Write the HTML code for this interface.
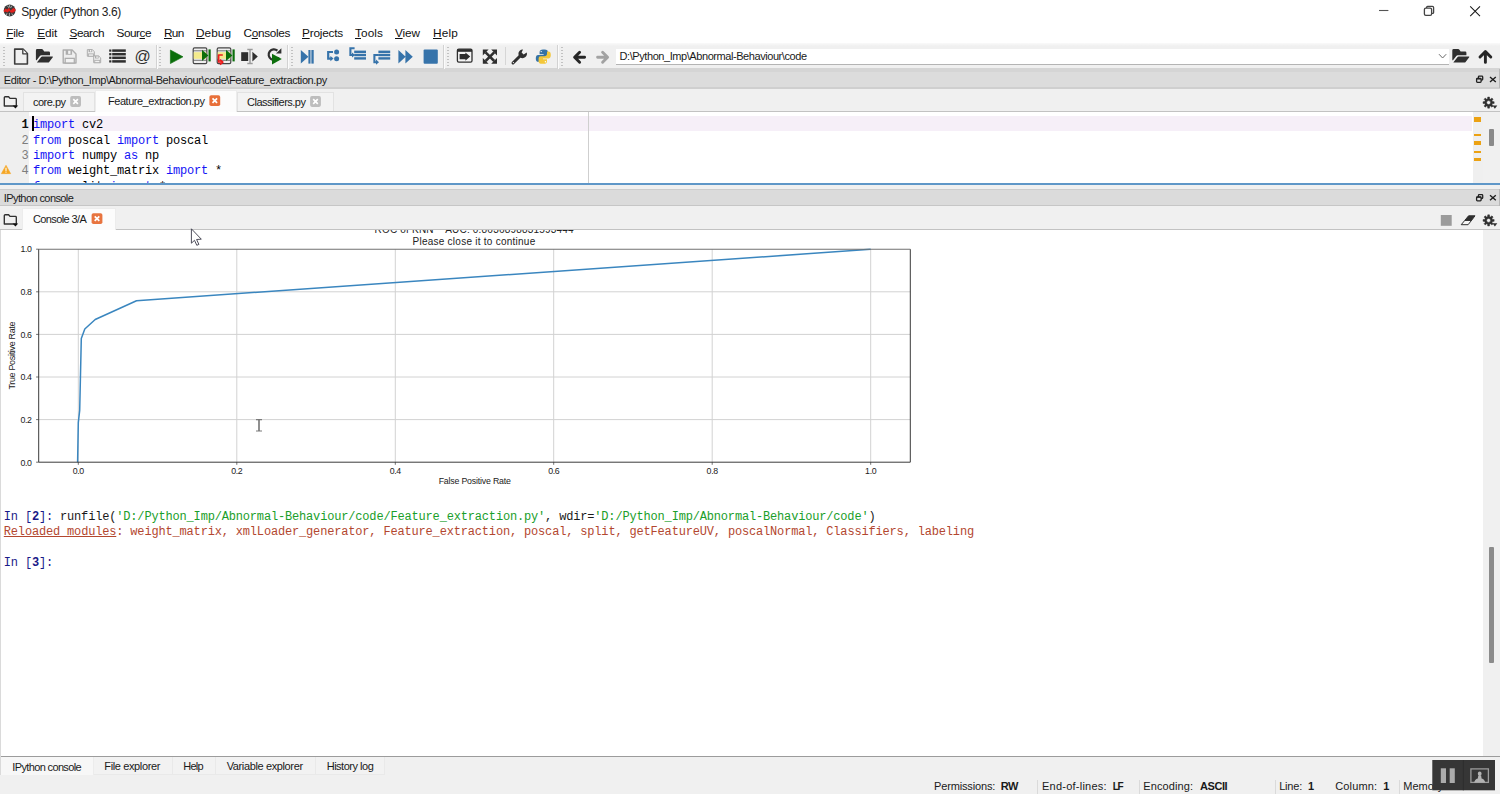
<!DOCTYPE html>
<html>
<head>
<meta charset="utf-8">
<title>Spyder (Python 3.6)</title>
<style>
*{box-sizing:border-box;margin:0;padding:0}
html,body{width:1500px;height:794px;overflow:hidden;background:#fff}
body{font-family:"Liberation Sans",sans-serif;font-size:11px;color:#000;position:relative}
.abs{position:absolute}
.t{position:absolute;white-space:pre;line-height:20px;height:20px}
svg{position:absolute;overflow:visible}
u{text-decoration:underline;text-underline-offset:1px;text-decoration-thickness:1px}
#titlebar{left:0;top:0;width:1500px;height:22px;background:#fff}
#menubar{left:0;top:22px;width:1500px;height:22px;background:#fff}
#toolbar{left:0;top:43px;width:1500px;height:25px;background:linear-gradient(#fafafa,#f0f0f0 3px)}
#edtitle{left:0;top:68px;width:1500px;height:21px;background:#dcdcdc;border-top:4px solid #d5d5d5;border-bottom:2px solid #cfcfcf}
#edtabs{left:0;top:89px;width:1500px;height:23px;background:#f0f0f0;border-bottom:1px solid #c2c2c2}
#editor{left:0;top:112px;width:1500px;height:71px;background:#fff;overflow:hidden}
#split{left:0;top:183px;width:1500px;height:6px;background:#f0f0f0;border-top:2px solid #5f97c8}
#cotitle{left:0;top:189px;width:1500px;height:17px;background:#dbdbdb;border-top:1px solid #cdcdcd;border-bottom:1px solid #c6c6c6}
#cotabs{left:0;top:206px;width:1500px;height:24px;background:#f0f0f0;border-bottom:1px solid #c2c2c2}
#console{left:0;top:230px;width:1500px;height:526px;background:#fff;overflow:hidden}
#bottabs{left:0;top:756px;width:1500px;height:22px;background:#f0f0f0;border-top:1px solid #9c9c9c}
#status{left:0;top:778px;width:1500px;height:16px;background:#f0f0f0}
.tab{position:absolute;background:#f3f3f3;border:1px solid #e2e2e2;border-bottom:none}
.tab.sel{background:#fcfcfc;border-color:#ececec}
.sep{position:absolute;width:1px;background:#d4d4d4}
.grip{position:absolute;width:2px;height:19px;top:47px;background:repeating-linear-gradient(#c2c2c2 0 1px,transparent 1px 3px)}
</style>
</head>
<body>
<div id="titlebar" class="abs"></div>
<div id="menubar" class="abs"></div>
<div id="toolbar" class="abs"></div>
<div id="edtitle" class="abs"></div>
<div id="edtabs" class="abs"></div>
<div id="editor" class="abs"></div>
<div id="split" class="abs"></div>
<div id="cotitle" class="abs"></div>
<div id="cotabs" class="abs"></div>
<div id="console" class="abs"></div>
<div id="bottabs" class="abs"></div>
<div id="status" class="abs"></div>
<div class="t" style="left:21.20px;top:2px;font-size:12px;color:#222;letter-spacing:-0.370px;">Spyder (Python 3.6)</div>
<div class="t" style="left:6.30px;top:23px;font-size:11.8px;color:#111;letter-spacing:-0.329px;"><u>F</u>ile</div>
<div class="t" style="left:37.30px;top:23px;font-size:11.8px;color:#111;letter-spacing:-0.082px;"><u>E</u>dit</div>
<div class="t" style="left:69.50px;top:23px;font-size:11.8px;color:#111;letter-spacing:-0.482px;"><u>S</u>earch</div>
<div class="t" style="left:116.50px;top:23px;font-size:11.8px;color:#111;letter-spacing:-0.482px;">Sour<u>c</u>e</div>
<div class="t" style="left:164.00px;top:23px;font-size:11.8px;color:#111;letter-spacing:-0.719px;"><u>R</u>un</div>
<div class="t" style="left:196.00px;top:23px;font-size:11.8px;color:#111;letter-spacing:0.047px;"><u>D</u>ebug</div>
<div class="t" style="left:243.50px;top:23px;font-size:11.8px;color:#111;letter-spacing:-0.336px;">C<u>o</u>nsoles</div>
<div class="t" style="left:302.00px;top:23px;font-size:11.8px;color:#111;letter-spacing:-0.203px;"><u>P</u>rojects</div>
<div class="t" style="left:355.00px;top:23px;font-size:11.8px;color:#111;letter-spacing:0.091px;"><u>T</u>ools</div>
<div class="t" style="left:395.00px;top:23px;font-size:11.8px;color:#111;letter-spacing:-0.090px;"><u>V</u>iew</div>
<div class="t" style="left:433.00px;top:23px;font-size:11.8px;color:#111;letter-spacing:0.184px;"><u>H</u>elp</div>
<div class="t" style="left:3.75px;top:70px;font-size:11px;color:#1a1a1a;letter-spacing:-0.411px;">Editor - D:\Python_Imp\Abnormal-Behaviour\code\Feature_extraction.py</div>
<div class="t" style="left:3.75px;top:188px;font-size:11px;color:#1a1a1a;letter-spacing:-0.585px;">IPython console</div>
<div class="tab" style="left:23px;top:92px;width:72px;height:19px"></div>
<div class="tab sel" style="left:95px;top:90px;width:141.5px;height:22px"></div>
<div class="tab" style="left:236.5px;top:92px;width:97.5px;height:19px"></div>
<div class="t" style="left:33.00px;top:92px;font-size:11px;color:#1a1a1a;letter-spacing:-0.511px;">core.py</div>
<div class="t" style="left:108.00px;top:91px;font-size:11px;color:#1a1a1a;letter-spacing:-0.471px;">Feature_extraction.py</div>
<div class="t" style="left:247.00px;top:92px;font-size:11px;color:#1a1a1a;letter-spacing:-0.493px;">Classifiers.py</div>
<div class="tab sel" style="left:22px;top:208px;width:94px;height:22px"></div>
<div class="t" style="left:33.00px;top:209px;font-size:11px;color:#1a1a1a;letter-spacing:-0.608px;">Console 3/A</div>
<div class="tab sel" style="left:0px;top:757px;width:94px;height:18px;border-top:none;border-left:none;background:#f7f7f7"></div>
<div class="tab" style="left:94px;top:757px;width:79px;height:18px;border-top:none;border-left:none;border-color:#e9e9e9;border-bottom:1px solid #e9e9e9;background:#f2f2f2"></div>
<div class="tab" style="left:173px;top:757px;width:43px;height:18px;border-top:none;border-left:none;border-color:#e9e9e9;border-bottom:1px solid #e9e9e9;background:#f2f2f2"></div>
<div class="tab" style="left:216px;top:757px;width:100px;height:18px;border-top:none;border-left:none;border-color:#e9e9e9;border-bottom:1px solid #e9e9e9;background:#f2f2f2"></div>
<div class="tab" style="left:316px;top:757px;width:69px;height:18px;border-top:none;border-left:none;border-color:#e9e9e9;border-bottom:1px solid #e9e9e9;background:#f2f2f2"></div>
<div class="t" style="left:12.30px;top:757px;font-size:11px;color:#1a1a1a;letter-spacing:-0.639px;">IPython console</div>
<div class="t" style="left:104.30px;top:756px;font-size:11px;color:#1a1a1a;letter-spacing:-0.372px;">File explorer</div>
<div class="t" style="left:183.30px;top:756px;font-size:11px;color:#1a1a1a;letter-spacing:-0.806px;">Help</div>
<div class="t" style="left:226.70px;top:756px;font-size:11px;color:#1a1a1a;letter-spacing:-0.373px;">Variable explorer</div>
<div class="t" style="left:326.70px;top:756px;font-size:11px;color:#1a1a1a;letter-spacing:-0.488px;">History log</div>
<div class="abs" style="left:616px;top:48.6px;width:833px;height:16.4px;background:#fff;border-bottom:1px solid #b4b4b4"></div>
<div class="t" style="left:619.60px;top:46px;font-size:11px;color:#1a1a1a;letter-spacing:-0.432px;">D:\Python_Imp\Abnormal-Behaviour\code</div>
<div class="abs" style="left:0;top:112px;width:29px;height:71px;background:#efefef"></div>
<div class="abs" style="left:29px;top:116px;width:1443px;height:15px;background:#f6eff8"></div>
<div class="abs" style="left:588px;top:112px;width:1px;height:71px;background:#cfcfcf"></div>
<div class="abs" style="left:1473px;top:112px;width:10px;height:71px;background:#efefef"></div>
<div class="abs" style="left:1483px;top:112px;width:17px;height:71px;background:#f0f0f0"></div>
<div class="abs" style="left:1489px;top:129px;width:5px;height:17px;background:#8a8a8a;border-radius:1px"></div>
<div class="abs" style="left:1474px;top:116.8px;width:7.4px;height:5.7px;background:#eca213"></div>
<div class="abs" style="left:1474px;top:133.7px;width:7.4px;height:2.4px;background:#eca213"></div>
<div class="abs" style="left:1474px;top:141.3px;width:7.4px;height:3.9px;background:#eca213"></div>
<div class="abs" style="left:1474px;top:150.6px;width:7.4px;height:2.5px;background:#eca213"></div>
<div class="abs" style="left:1474px;top:158.4px;width:7.4px;height:2.5px;background:#eca213"></div>
<div class="abs" style="left:0;top:112px;width:1500px;height:71.3px;overflow:hidden"><div class="abs" style="left:0;top:-112px;width:1500px;height:300px">
<div class="t" style="left:21.40px;top:115px;font-size:12px;font-family:'Liberation Mono',monospace;font-weight:700;color:#111;letter-spacing:-0.203px;">1</div>
<div class="t" style="left:33.00px;top:115px;font-size:12px;font-family:'Liberation Mono',monospace;color:#1414f5;letter-spacing:-0.203px;">import</div>
<div class="t" style="left:82.00px;top:115px;font-size:12px;font-family:'Liberation Mono',monospace;letter-spacing:-0.203px;">cv2</div>
<div class="t" style="left:21.40px;top:131px;font-size:12px;font-family:'Liberation Mono',monospace;color:#7d7d7d;letter-spacing:-0.203px;">2</div>
<div class="t" style="left:33.00px;top:131px;font-size:12px;font-family:'Liberation Mono',monospace;color:#1414f5;letter-spacing:-0.203px;">from</div>
<div class="t" style="left:68.00px;top:131px;font-size:12px;font-family:'Liberation Mono',monospace;letter-spacing:-0.203px;">poscal</div>
<div class="t" style="left:117.00px;top:131px;font-size:12px;font-family:'Liberation Mono',monospace;color:#1414f5;letter-spacing:-0.203px;">import</div>
<div class="t" style="left:166.00px;top:131px;font-size:12px;font-family:'Liberation Mono',monospace;letter-spacing:-0.203px;">poscal</div>
<div class="t" style="left:21.40px;top:146px;font-size:12px;font-family:'Liberation Mono',monospace;color:#7d7d7d;letter-spacing:-0.203px;">3</div>
<div class="t" style="left:33.00px;top:146px;font-size:12px;font-family:'Liberation Mono',monospace;color:#1414f5;letter-spacing:-0.203px;">import</div>
<div class="t" style="left:82.00px;top:146px;font-size:12px;font-family:'Liberation Mono',monospace;letter-spacing:-0.203px;">numpy</div>
<div class="t" style="left:124.00px;top:146px;font-size:12px;font-family:'Liberation Mono',monospace;color:#1414f5;letter-spacing:-0.203px;">as</div>
<div class="t" style="left:145.00px;top:146px;font-size:12px;font-family:'Liberation Mono',monospace;letter-spacing:-0.203px;">np</div>
<div class="t" style="left:21.40px;top:161px;font-size:12px;font-family:'Liberation Mono',monospace;color:#7d7d7d;letter-spacing:-0.203px;">4</div>
<div class="t" style="left:33.00px;top:161px;font-size:12px;font-family:'Liberation Mono',monospace;color:#1414f5;letter-spacing:-0.203px;">from</div>
<div class="t" style="left:68.00px;top:161px;font-size:12px;font-family:'Liberation Mono',monospace;letter-spacing:-0.202px;">weight_matrix</div>
<div class="t" style="left:166.00px;top:161px;font-size:12px;font-family:'Liberation Mono',monospace;color:#1414f5;letter-spacing:-0.203px;">import</div>
<div class="t" style="left:215.00px;top:161px;font-size:12px;font-family:'Liberation Mono',monospace;letter-spacing:-0.203px;">*</div>
<div class="t" style="left:33.00px;top:177px;font-size:12px;font-family:'Liberation Mono',monospace;color:#1414f5;letter-spacing:-0.203px;">from</div>
<div class="t" style="left:68.00px;top:177px;font-size:12px;font-family:'Liberation Mono',monospace;letter-spacing:-0.203px;">split</div>
<div class="t" style="left:110.00px;top:177px;font-size:12px;font-family:'Liberation Mono',monospace;color:#1414f5;letter-spacing:-0.203px;">import</div>
<div class="t" style="left:159.00px;top:177px;font-size:12px;font-family:'Liberation Mono',monospace;letter-spacing:-0.203px;">*</div>
</div></div>
<div class="abs" style="left:32.2px;top:116px;width:1.8px;height:15px;background:#000"></div>
<svg style="left:1.3px;top:165.3px" width="10" height="9" viewBox="0 0 11 10"><path d="M5.5 0.3 L10.7 9.6 L0.3 9.6 Z" fill="#f5a623" stroke="#f5a623" stroke-width="0.6" stroke-linejoin="round"/><rect x="4.9" y="3" width="1.2" height="3.6" fill="#fff"/><rect x="4.9" y="7.3" width="1.2" height="1.2" fill="#fff"/></svg>
<div class="abs" style="left:0;top:230px;width:1483px;height:525px;overflow:hidden"><div class="abs" style="left:0;top:-230px;width:1483px;height:800px">
<div class="t" style="left:374.50px;top:220px;font-size:10px;color:#222;letter-spacing:0.205px;">ROC of KNN    AUC: 0.8636898831593444</div>
<div class="t" style="left:412.50px;top:232px;font-size:10px;color:#222;letter-spacing:0.252px;">Please close it to continue</div>
<svg style="left:0;top:0" width="1000" height="500" viewBox="0 0 1000 500"><line x1="78.3" y1="249.2" x2="78.3" y2="462.2" stroke="#d2d2d2" stroke-width="1"/><line x1="236.8" y1="249.2" x2="236.8" y2="462.2" stroke="#d2d2d2" stroke-width="1"/><line x1="395.3" y1="249.2" x2="395.3" y2="462.2" stroke="#d2d2d2" stroke-width="1"/><line x1="553.7" y1="249.2" x2="553.7" y2="462.2" stroke="#d2d2d2" stroke-width="1"/><line x1="712.2" y1="249.2" x2="712.2" y2="462.2" stroke="#d2d2d2" stroke-width="1"/><line x1="870.7" y1="249.2" x2="870.7" y2="462.2" stroke="#d2d2d2" stroke-width="1"/><line x1="38.7" y1="419.6" x2="910.3" y2="419.6" stroke="#d2d2d2" stroke-width="1"/><line x1="38.7" y1="377.0" x2="910.3" y2="377.0" stroke="#d2d2d2" stroke-width="1"/><line x1="38.7" y1="334.4" x2="910.3" y2="334.4" stroke="#d2d2d2" stroke-width="1"/><line x1="38.7" y1="291.8" x2="910.3" y2="291.8" stroke="#d2d2d2" stroke-width="1"/><polyline fill="none" stroke="#3a86bf" stroke-width="1.5" stroke-linejoin="round" points="77.6,462.2 78.3,422.7 79.7,410.4 81.3,338.4 84.8,329.0 95.2,319.5 136.5,300.7 870.7,249.3"/><path d="M38.7 249.2 V462.2 H910.3 V249.2" fill="none" stroke="#3a3a3a" stroke-width="1"/><path d="M38.7 249.2 H910.3" stroke="#707070" stroke-width="1.1"/><line x1="78.3" y1="462.2" x2="78.3" y2="464.8" stroke="#333" stroke-width="0.7"/><line x1="36.1" y1="462.2" x2="38.7" y2="462.2" stroke="#333" stroke-width="0.7"/><line x1="236.8" y1="462.2" x2="236.8" y2="464.8" stroke="#333" stroke-width="0.7"/><line x1="36.1" y1="419.6" x2="38.7" y2="419.6" stroke="#333" stroke-width="0.7"/><line x1="395.3" y1="462.2" x2="395.3" y2="464.8" stroke="#333" stroke-width="0.7"/><line x1="36.1" y1="377.0" x2="38.7" y2="377.0" stroke="#333" stroke-width="0.7"/><line x1="553.7" y1="462.2" x2="553.7" y2="464.8" stroke="#333" stroke-width="0.7"/><line x1="36.1" y1="334.4" x2="38.7" y2="334.4" stroke="#333" stroke-width="0.7"/><line x1="712.2" y1="462.2" x2="712.2" y2="464.8" stroke="#333" stroke-width="0.7"/><line x1="36.1" y1="291.8" x2="38.7" y2="291.8" stroke="#333" stroke-width="0.7"/><line x1="870.7" y1="462.2" x2="870.7" y2="464.8" stroke="#333" stroke-width="0.7"/><line x1="36.1" y1="249.2" x2="38.7" y2="249.2" stroke="#333" stroke-width="0.7"/></svg>
<div class="t" style="left:72.70px;top:461px;font-size:8.8px;color:#222;letter-spacing:-0.345px;">0.0</div>
<div class="t" style="left:20.60px;top:453px;font-size:8.8px;color:#222;letter-spacing:-0.411px;">0.0</div>
<div class="t" style="left:231.18px;top:461px;font-size:8.8px;color:#222;letter-spacing:-0.345px;">0.2</div>
<div class="t" style="left:20.60px;top:410px;font-size:8.8px;color:#222;letter-spacing:-0.411px;">0.2</div>
<div class="t" style="left:389.66px;top:461px;font-size:8.8px;color:#222;letter-spacing:-0.345px;">0.4</div>
<div class="t" style="left:20.60px;top:367px;font-size:8.8px;color:#222;letter-spacing:-0.411px;">0.4</div>
<div class="t" style="left:548.14px;top:461px;font-size:8.8px;color:#222;letter-spacing:-0.345px;">0.6</div>
<div class="t" style="left:20.60px;top:325px;font-size:8.8px;color:#222;letter-spacing:-0.411px;">0.6</div>
<div class="t" style="left:706.62px;top:461px;font-size:8.8px;color:#222;letter-spacing:-0.345px;">0.8</div>
<div class="t" style="left:20.60px;top:282px;font-size:8.8px;color:#222;letter-spacing:-0.411px;">0.8</div>
<div class="t" style="left:865.10px;top:461px;font-size:8.8px;color:#222;letter-spacing:-0.345px;">1.0</div>
<div class="t" style="left:20.60px;top:239px;font-size:8.8px;color:#222;letter-spacing:-0.411px;">1.0</div>
<div class="t" style="left:438.70px;top:471px;font-size:8.8px;color:#222;letter-spacing:-0.200px;">False Positive Rate</div>
<div class="t" style="left:0.00px;top:-13px;font-size:9px;color:#222;letter-spacing:-0.328px;transform-origin:0 0;transform:translate(2.3px,389.6px) rotate(-90deg);top:0;left:0;">True Positive Rate</div>
</div></div>
<div class="t" style="left:3.80px;top:507px;font-size:12px;font-family:'Liberation Mono',monospace;color:#1a1a88;letter-spacing:-0.173px;">In [</div>
<div class="t" style="left:31.92px;top:507px;font-size:12px;font-family:'Liberation Mono',monospace;font-weight:700;color:#1a1a88;letter-spacing:-0.173px;">2</div>
<div class="t" style="left:38.95px;top:507px;font-size:12px;font-family:'Liberation Mono',monospace;color:#1a1a88;letter-spacing:-0.173px;">]:</div>
<div class="t" style="left:60.04px;top:507px;font-size:12px;font-family:'Liberation Mono',monospace;color:#1a1a1a;letter-spacing:-0.171px;">runfile(</div>
<div class="t" style="left:116.28px;top:507px;font-size:12px;font-family:'Liberation Mono',monospace;color:#1a9e2a;letter-spacing:-0.171px;">&#x27;D:/Python_Imp/Abnormal-Behaviour/code/Feature_extraction.py&#x27;</div>
<div class="t" style="left:545.11px;top:507px;font-size:12px;font-family:'Liberation Mono',monospace;color:#1a1a1a;letter-spacing:-0.173px;">, wdir=</div>
<div class="t" style="left:594.32px;top:507px;font-size:12px;font-family:'Liberation Mono',monospace;color:#1a9e2a;letter-spacing:-0.172px;">&#x27;D:/Python_Imp/Abnormal-Behaviour/code&#x27;</div>
<div class="t" style="left:868.49px;top:507px;font-size:12px;font-family:'Liberation Mono',monospace;color:#1a1a1a;letter-spacing:-0.173px;">)</div>
<div class="t" style="left:3.80px;top:522px;font-size:12px;font-family:'Liberation Mono',monospace;color:#b3472f;letter-spacing:-0.171px;"><u>Reloaded modules</u></div>
<div class="t" style="left:116.28px;top:522px;font-size:12px;font-family:'Liberation Mono',monospace;color:#b3472f;letter-spacing:-0.171px;">: weight_matrix, xmlLoader_generator, Feature_extraction, poscal, split, getFeatureUV, poscalNormal, Classifiers, labeling</div>
<div class="t" style="left:3.80px;top:553px;font-size:12px;font-family:'Liberation Mono',monospace;color:#1a1a88;letter-spacing:-0.173px;">In [</div>
<div class="t" style="left:31.92px;top:553px;font-size:12px;font-family:'Liberation Mono',monospace;font-weight:700;color:#1a1a88;letter-spacing:-0.173px;">3</div>
<div class="t" style="left:38.95px;top:553px;font-size:12px;font-family:'Liberation Mono',monospace;color:#1a1a88;letter-spacing:-0.173px;">]:</div>
<div class="abs" style="left:1483px;top:230px;width:17px;height:526px;background:#f0f0f0"></div>
<div class="abs" style="left:1489px;top:547px;width:5px;height:116px;background:#8c8c8c;border-radius:1px"></div>
<div class="abs" style="left:0;top:230px;width:1px;height:545px;background:#dadada"></div>
<div class="t" style="left:934.00px;top:776px;font-size:11px;color:#1a1a1a;letter-spacing:-0.147px;">Permissions:</div>
<div class="t" style="left:1000.80px;top:776px;font-size:11px;font-weight:700;color:#1a1a1a;letter-spacing:-0.470px;">RW</div>
<div class="t" style="left:1042.00px;top:776px;font-size:11px;color:#1a1a1a;letter-spacing:0.233px;">End-of-lines:</div>
<div class="t" style="left:1112.80px;top:777px;font-size:10px;font-weight:700;color:#1a1a1a;letter-spacing:-1.309px;">LF</div>
<div class="t" style="left:1143.20px;top:776px;font-size:11px;color:#1a1a1a;letter-spacing:0.118px;">Encoding:</div>
<div class="t" style="left:1200.00px;top:776px;font-size:11px;font-weight:700;color:#1a1a1a;letter-spacing:-0.429px;">ASCII</div>
<div class="t" style="left:1279.20px;top:776px;font-size:11px;color:#1a1a1a;letter-spacing:-0.212px;">Line:</div>
<div class="t" style="left:1308.00px;top:776px;font-size:11px;font-weight:700;color:#1a1a1a;">1</div>
<div class="t" style="left:1335.20px;top:776px;font-size:11px;color:#1a1a1a;letter-spacing:0.147px;">Column:</div>
<div class="t" style="left:1383.20px;top:776px;font-size:11px;font-weight:700;color:#1a1a1a;">1</div>
<div class="t" style="left:1403.20px;top:776px;font-size:11px;color:#1a1a1a;letter-spacing:0.044px;">Memory</div>
<div class="sep" style="left:1037px;top:780px;height:14px;background:#dadada"></div>
<div class="sep" style="left:1139px;top:780px;height:14px;background:#dadada"></div>
<div class="sep" style="left:1275px;top:780px;height:14px;background:#dadada"></div>
<div class="sep" style="left:1399px;top:780px;height:14px;background:#dadada"></div>
<div class="grip" style="left:3.2px"></div>
<div class="grip" style="left:159.4px"></div>
<div class="grip" style="left:291px"></div>
<div class="grip" style="left:447.4px"></div>
<div class="grip" style="left:560.8px"></div>
<div class="sep" style="left:155.5px;top:45px;height:24px;background:#d2d2d2"></div><div class="sep" style="left:156.5px;top:45px;height:24px;background:#fbfbfb"></div>
<div class="sep" style="left:287.2px;top:45px;height:24px;background:#d2d2d2"></div><div class="sep" style="left:288.2px;top:45px;height:24px;background:#fbfbfb"></div>
<div class="sep" style="left:443.3px;top:45px;height:24px;background:#d2d2d2"></div><div class="sep" style="left:444.3px;top:45px;height:24px;background:#fbfbfb"></div>
<div class="sep" style="left:557px;top:45px;height:24px;background:#d2d2d2"></div><div class="sep" style="left:558px;top:45px;height:24px;background:#fbfbfb"></div>
<div class="sep" style="left:505px;top:47px;height:18px;background:#d6d6d6"></div>
<svg style="left:0;top:0" width="1500" height="794" viewBox="0 0 1500 794"><circle cx="9.6" cy="10.5" r="5.9" fill="#3b3b3b"/><path d="M3.7 10.8 L5.4 8.4 L7.2 9.6 L9 7.8 L10.6 10.6 L13.2 8 L15.5 9 L15.5 10.8 L13.6 12.4 L11 12.8 L9.4 11 L7.4 12.6 L5.2 11.6 L4 12.4 Z" fill="#e0201c"/><path d="M9.6 4.8 V7.4 M7.4 5.6 L8.8 7.8 M11.8 5.6 L10.6 8 M9.4 13 V16 M7 13.2 L6.4 15.2 M11.8 13.4 L12.6 15.2" stroke="#d8d8d8" stroke-width="0.7"/><path d="M1379 10.5 H1388.4" stroke="#555" stroke-width="1.1"/><rect x="1424.4" y="8.2" width="7.2" height="7.2" rx="1.4" fill="none" stroke="#444" stroke-width="1.3"/><path d="M1426.6 8 V7.4 Q1426.6 6.4 1427.6 6.4 H1432.4 Q1433.6 6.4 1433.6 7.6 V12.4 Q1433.6 13.4 1432.6 13.4 H1432" fill="none" stroke="#444" stroke-width="1.3"/><path d="M1470.2 6.4 L1480 16.2 M1480 6.4 L1470.2 16.2" stroke="#1a1a1a" stroke-width="1.05"/><path d="M14.7 49.1 H23 L27.4 53.6 V64 H14.7 Z" fill="none" stroke="#3d3d3d" stroke-width="1.6" stroke-linejoin="round"/><path d="M22.8 49.3 V53.8 H27.2" fill="#fafafa" stroke="#3d3d3d" stroke-width="1.3" stroke-linejoin="round"/><path d="M35.9 59.8 V50.4 Q35.9 49.1 37.2 49.1 H41.6 Q42.6 49.1 43.2 50 L44.2 51.5 H48.8 Q50 51.5 50 52.7 V55.2 H41.4 Q40.4 55.2 39.9 56 L36.4 60.6 Z" fill="#2f2f2f"/><path d="M36.9 62.5 L41.2 56.9 Q41.5 56.4 42.2 56.4 H52.4 Q53.3 56.4 52.8 57.2 L49.2 61.9 Q48.8 62.5 48 62.5 Z" fill="#2f2f2f"/><path d="M63.20 50.00 H72.16 L76.00 53.91 V63.00 H63.20 Z" fill="#eeeeee" stroke="#adadad" stroke-width="1.4" stroke-linejoin="round"/><rect x="65.69" y="50.00" width="6.39" height="4.75" fill="#adadad"/><rect x="68.18" y="50.72" width="2.27" height="3.17" fill="#f4f4f4"/><rect x="65.20" y="58.37" width="9.09" height="4.63" fill="#f2f2f2" stroke="#adadad" stroke-width="1.26"/><path d="M87.30 49.60 H92.24 L94.30 51.53 V56.20 H87.30 Z" fill="#eeeeee" stroke="#adadad" stroke-width="1.0" stroke-linejoin="round"/><rect x="88.60" y="49.60" width="3.60" height="2.51" fill="#adadad"/><rect x="90.00" y="49.98" width="1.28" height="1.67" fill="#f4f4f4"/><rect x="88.32" y="53.89" width="5.12" height="2.31" fill="#f2f2f2" stroke="#adadad" stroke-width="0.90"/><path d="M93.70 55.90 H98.64 L100.70 57.90 V62.70 H93.70 Z" fill="#eeeeee" stroke="#adadad" stroke-width="1.0" stroke-linejoin="round"/><rect x="95.00" y="55.90" width="3.60" height="2.57" fill="#adadad"/><rect x="96.40" y="56.29" width="1.28" height="1.72" fill="#f4f4f4"/><rect x="94.72" y="60.31" width="5.12" height="2.39" fill="#f2f2f2" stroke="#adadad" stroke-width="0.90"/><rect x="109.2" y="49.5" width="2.2" height="2.2" fill="#2f2f2f"/><rect x="112.2" y="49.35" width="13.6" height="2.5" fill="#2f2f2f"/><rect x="109.2" y="53.1" width="2.2" height="2.2" fill="#2f2f2f"/><rect x="112.2" y="52.95" width="13.6" height="2.5" fill="#2f2f2f"/><rect x="109.2" y="56.699999999999996" width="2.2" height="2.2" fill="#2f2f2f"/><rect x="112.2" y="56.55" width="13.6" height="2.5" fill="#2f2f2f"/><rect x="109.2" y="60.3" width="2.2" height="2.2" fill="#2f2f2f"/><rect x="112.2" y="60.15" width="13.6" height="2.5" fill="#2f2f2f"/><path d="M170.4 50 L183 56.8 L170.4 63.6 Z" fill="#0b6e0b" stroke="#0b6e0b" stroke-width="0.6" stroke-linejoin="round"/><rect x="193.2" y="47.8" width="13.6" height="15.8" rx="1.4" fill="#efefef" stroke="#454545" stroke-width="1.2"/><rect x="193.7" y="52.2" width="12.6" height="6.6" fill="#f3ea8c"/><path d="M193.2 50.8 H206.79999999999998 M193.2 60.3 H206.79999999999998" stroke="#555" stroke-width="0.8"/><path d="M202.0 49.8 L208.39999999999998 55.4 L202.0 61 Z" fill="#0b6e0b"/><rect x="208.5" y="49.4" width="2.2" height="12" fill="#0b6e0b"/><rect x="217.2" y="47.8" width="13.6" height="15.8" rx="1.4" fill="#efefef" stroke="#454545" stroke-width="1.2"/><rect x="217.7" y="52.2" width="12.6" height="6.6" fill="#f3ea8c"/><path d="M217.2 50.8 H230.79999999999998 M217.2 60.3 H230.79999999999998" stroke="#555" stroke-width="0.8"/><path d="M226.0 49.8 L232.39999999999998 55.4 L226.0 61 Z" fill="#0b6e0b"/><rect x="232.5" y="49.4" width="2.2" height="12" fill="#0b6e0b"/><path d="M222.8 55 H218.6 V62 H221.2 M220 59.6 L222.8 62.2 L220 64.6" fill="none" stroke="#ee1c1c" stroke-width="1.7" stroke-linejoin="round"/><rect x="241.2" y="52.2" width="7" height="8.8" fill="#2f2f2f"/><path d="M252.4 51.8 L257.8 56.6 L252.4 61.4 Z" fill="#2f2f2f"/><path d="M247.3 49.6 H252.7 M247.3 63.6 H252.7 M250 49.6 V63.6" stroke="#9a9a9a" stroke-width="1.5" fill="none"/><path d="M278.6 57.2 A5.3 5.3 0 1 1 277.4 50.6" fill="none" stroke="#2f2f2f" stroke-width="2.2"/><path d="M281.4 48.2 V53.6 H276 Z" fill="#2f2f2f"/><path d="M272 53.8 L281.8 59 L272 64.4 Z" fill="#0b6e0b"/><path d="M300.8 50 L308.4 56.8 L300.8 63.6 Z" fill="#3673aa"/><rect x="308.4" y="50" width="2.1" height="13.6" fill="#3673aa"/><rect x="311.4" y="50" width="2.3" height="13.6" fill="#3673aa"/><circle cx="336.6" cy="52.1" r="2.5" fill="#3673aa"/><circle cx="336.6" cy="58.7" r="2.5" fill="#3673aa"/><path d="M333 52 H328.2 V58.6 H331" fill="none" stroke="#3673aa" stroke-width="2.2"/><path d="M330.4 56 L333.6 58.6 L330.4 61.2 Z" fill="#3673aa"/><rect x="354.2" y="50.599999999999994" width="11.8" height="2.4" fill="#3673aa"/><rect x="354.2" y="53.8" width="11.8" height="2.4" fill="#3673aa"/><rect x="354.2" y="57.199999999999996" width="11.8" height="2.4" fill="#3673aa"/><path d="M354.6 48.2 H350.4 V55 H352.6" fill="none" stroke="#3673aa" stroke-width="2.1"/><path d="M352 52.6 L355 55 L352 57.4 Z" fill="#3673aa"/><rect x="378.4" y="50.599999999999994" width="11.8" height="2.4" fill="#3673aa"/><rect x="378.4" y="53.8" width="11.8" height="2.4" fill="#3673aa"/><rect x="378.4" y="57.199999999999996" width="11.8" height="2.4" fill="#3673aa"/><path d="M378.8 55 H374.4 V62.2 H376.6" fill="none" stroke="#3673aa" stroke-width="2.1"/><path d="M376 59.6 L379 62.2 L376 64.8 Z" fill="#3673aa"/><path d="M398.4 50 L405.6 56.8 L398.4 63.6 Z M405.4 50 L412.8 56.8 L405.4 63.6 Z" fill="#3673aa"/><rect x="423.6" y="49.6" width="14.2" height="14.2" rx="1" fill="#3673aa"/><rect x="457.4" y="49.2" width="14.6" height="13" rx="1.4" fill="#f4f4f4" stroke="#2f2f2f" stroke-width="1.3"/><rect x="457.4" y="49.2" width="14.6" height="2.6" fill="#2f2f2f"/><path d="M459.6 54 H465.4 V52.4 L470.2 56.6 L465.4 60.8 V59.2 H459.6 Z" fill="#2f2f2f"/><path d="M485.6 52.4 L494.2 61 M494.2 52.4 L485.6 61" stroke="#2f2f2f" stroke-width="2.5"/><path d="M482.8 49.6 h5.8 l-5.8 5.8 Z" fill="#2f2f2f"/><path d="M497 49.6 h-5.8 l5.8 5.8 Z" fill="#2f2f2f"/><path d="M482.8 63.8 h5.8 l-5.8 -5.8 Z" fill="#2f2f2f"/><path d="M497 63.8 h-5.8 l5.8 -5.8 Z" fill="#2f2f2f"/><path d="M513 63 L520.8 55.2" stroke="#2f2f2f" stroke-width="3" stroke-linecap="round"/><path d="M526.8 52.6 A4.3 4.3 0 1 1 523 49.6 L521.6 52.6 L523.6 54.4 Z" fill="#2f2f2f"/><circle cx="513.4" cy="62.6" r="0.7" fill="#eee"/><path d="M543 49.6 q-3.4 0 -3.4 2.6 v2 h4 v0.8 h-5.4 q-2.4 0 -2.4 3.4 q0 3.4 2.4 3.4 h1.4 v-2.2 q0 -2.4 2.6 -2.4 h3.8 q2 0 2 -2 v-3 q0 -2.6 -3.4 -2.6 z" fill="#3572a5"/><path d="M543.6 63.8 q3.4 0 3.4 -2.6 v-2 h-4 v-0.8 h5.4 q2.4 0 2.4 -3.4 q0 -3.4 -2.4 -3.4 h-1.4 v2.2 q0 2.4 -2.6 2.4 h-3.8 q-2 0 -2 2 v3 q0 2.6 3.4 2.6 z" fill="#f3c73a"/><circle cx="541.2" cy="51.6" r="0.7" fill="#fff"/><circle cx="545.4" cy="61.8" r="0.7" fill="#fff"/><path d="M584.6 57.2 H575.4 M579.6 52.2 L574.6 57.2 L579.6 62.2" fill="none" stroke="#262626" stroke-width="2.9" stroke-linejoin="round" stroke-linecap="round"/><path d="M597.6 57.2 H606.8 M602.6 52.2 L607.6 57.2 L602.6 62.2" fill="none" stroke="#a2a2a2" stroke-width="2.9" stroke-linejoin="round" stroke-linecap="round"/><path d="M1439 54.2 L1442.6 58 L1446.2 54.2" fill="none" stroke="#6a6a6a" stroke-width="1"/><path d="M1452.3000000000002 59.8 V50.4 Q1452.3000000000002 49.1 1453.6000000000001 49.1 H1458.0 Q1459.0 49.1 1459.6000000000001 50 L1460.6000000000001 51.5 H1465.2 Q1466.4 51.5 1466.4 52.7 V55.2 H1457.8000000000002 Q1456.8000000000002 55.2 1456.3000000000002 56 L1452.8000000000002 60.6 Z" fill="#2f2f2f"/><path d="M1453.3000000000002 62.5 L1457.6000000000001 56.9 Q1457.9 56.4 1458.6000000000001 56.4 H1468.8000000000002 Q1469.7 56.4 1469.2 57.2 L1465.6000000000001 61.9 Q1465.2 62.5 1464.4 62.5 Z" fill="#2f2f2f"/><path d="M1485.4 62.4 V52.6 M1480 57 L1485.4 51.6 L1490.8 57" fill="none" stroke="#262626" stroke-width="2.9" stroke-linejoin="round" stroke-linecap="round"/><rect x="1478.4" y="76.2" width="4.3" height="3.9" rx="0.8" fill="none" stroke="#222" stroke-width="1.3"/><rect x="1476.6" y="78.5" width="4.5" height="3.9" rx="0.8" fill="#dbdbdb" stroke="#222" stroke-width="1.3"/><rect x="1476.6" y="78.2" width="4.5" height="1.2" fill="#222"/><path d="M1490 76.9 L1495.8 81.9 M1495.8 76.9 L1490 81.9" stroke="#1c1c1c" stroke-width="1.35"/><rect x="1478.4" y="194.60000000000002" width="4.3" height="3.9" rx="0.8" fill="none" stroke="#222" stroke-width="1.3"/><rect x="1476.6" y="196.9" width="4.5" height="3.9" rx="0.8" fill="#dbdbdb" stroke="#222" stroke-width="1.3"/><rect x="1476.6" y="196.60000000000002" width="4.5" height="1.2" fill="#222"/><path d="M1490 195.3 L1495.8 200.3 M1495.8 195.3 L1490 200.3" stroke="#1c1c1c" stroke-width="1.35"/><path d="M4.3 106 V97.6 Q4.3 96.7 5.2 96.7 H8.6 L10 98.4 H15.4 Q16.3 98.4 16.3 99.2 V106 Z" fill="none" stroke="#2f2f2f" stroke-width="1.35" stroke-linejoin="round"/><path d="M12.6 105.4 H18.2 L15.4 108.4 Z" fill="#111"/><path d="M4.3 224 V215.6 Q4.3 214.7 5.2 214.7 H8.6 L10 216.4 H15.4 Q16.3 216.4 16.3 217.2 V224 Z" fill="none" stroke="#2f2f2f" stroke-width="1.35" stroke-linejoin="round"/><path d="M12.6 223.4 H18.2 L15.4 226.4 Z" fill="#111"/><rect x="70.2" y="96.1" width="10.8" height="10.8" rx="1.8" fill="#bdbdbd"/><path d="M73.3 99.19999999999999 L77.9 103.8 M77.9 99.19999999999999 L73.3 103.8" stroke="#fff" stroke-width="1.7"/><rect x="209.4" y="95.2" width="10.8" height="10.8" rx="1.8" fill="#e8703a"/><path d="M212.5 98.3 L217.1 102.9 M217.1 98.3 L212.5 102.9" stroke="#fff" stroke-width="1.7"/><rect x="310.1" y="96.1" width="10.8" height="10.8" rx="1.8" fill="#bdbdbd"/><path d="M313.20000000000005 99.19999999999999 L317.8 103.8 M317.8 99.19999999999999 L313.20000000000005 103.8" stroke="#fff" stroke-width="1.7"/><rect x="91.6" y="213.2" width="10.8" height="10.8" rx="1.8" fill="#e8743f"/><path d="M94.69999999999999 216.29999999999998 L99.3 220.89999999999998 M99.3 216.29999999999998 L94.69999999999999 220.89999999999998" stroke="#fff" stroke-width="1.7"/><path d="M1494.13 101.72 L1494.13 103.48 L1492.47 103.59 L1492.04 104.64 L1493.13 105.89 L1491.89 107.13 L1490.64 106.04 L1489.59 106.47 L1489.48 108.13 L1487.72 108.13 L1487.61 106.47 L1486.56 106.04 L1485.31 107.13 L1484.07 105.89 L1485.16 104.64 L1484.73 103.59 L1483.07 103.48 L1483.07 101.72 L1484.73 101.61 L1485.16 100.56 L1484.07 99.31 L1485.31 98.07 L1486.56 99.16 L1487.61 98.73 L1487.72 97.07 L1489.48 97.07 L1489.59 98.73 L1490.64 99.16 L1491.89 98.07 L1493.13 99.31 L1492.04 100.56 L1492.47 101.61 Z M1490.60 102.60 A2.0 2.0 0 1 0 1486.60 102.60 A2.0 2.0 0 1 0 1490.60 102.60 Z" fill="#2f2f2f" fill-rule="evenodd" stroke="#2f2f2f" stroke-width="0.5" stroke-linejoin="round"/><path d="M1492.50 105.50 h4.8 l-2.4 3.2 Z" fill="#2f2f2f"/><path d="M1494.13 219.52 L1494.13 221.28 L1492.47 221.39 L1492.04 222.44 L1493.13 223.69 L1491.89 224.93 L1490.64 223.84 L1489.59 224.27 L1489.48 225.93 L1487.72 225.93 L1487.61 224.27 L1486.56 223.84 L1485.31 224.93 L1484.07 223.69 L1485.16 222.44 L1484.73 221.39 L1483.07 221.28 L1483.07 219.52 L1484.73 219.41 L1485.16 218.36 L1484.07 217.11 L1485.31 215.87 L1486.56 216.96 L1487.61 216.53 L1487.72 214.87 L1489.48 214.87 L1489.59 216.53 L1490.64 216.96 L1491.89 215.87 L1493.13 217.11 L1492.04 218.36 L1492.47 219.41 Z M1490.60 220.40 A2.0 2.0 0 1 0 1486.60 220.40 A2.0 2.0 0 1 0 1490.60 220.40 Z" fill="#2f2f2f" fill-rule="evenodd" stroke="#2f2f2f" stroke-width="0.5" stroke-linejoin="round"/><path d="M1492.50 223.30 h4.8 l-2.4 3.2 Z" fill="#2f2f2f"/><rect x="1440.8" y="215" width="10.9" height="10.8" fill="#9b9b9b"/><path d="M1461.2 224.7 L1464.9 220.3 H1471.6 L1468.1 224.7 Z" fill="#f6f6f6" stroke="#2f2f2f" stroke-width="1" stroke-linejoin="round"/><path d="M1464.9 220.3 L1468.6 215.8 H1475 L1471.6 220.3 Z" fill="#2f2f2f" stroke="#2f2f2f" stroke-width="1" stroke-linejoin="round"/><path d="M191.4 228.8 V243.2 L194.5 240.3 L196.8 245.3 L198.9 244.4 L196.6 239.5 L201.3 239.2 Z" fill="#fff" stroke="#3a3a48" stroke-width="0.9" stroke-linejoin="round"/><path d="M256 419.6 H262 M256 431 H262" stroke="#7a7a7a" stroke-width="1.1" fill="none"/><path d="M259 419.6 V431" stroke="#747474" stroke-width="1.6" fill="none"/><rect x="1499" y="69" width="1" height="19" fill="#b8b8b8"/><rect x="1499" y="189" width="1" height="17" fill="#b8b8b8"/></svg>
<div class="t" style="left:134.40px;top:47px;font-size:16px;color:#2f2f2f;letter-spacing:-1.050px;">@</div>
<svg style="left:0;top:0" width="1500" height="794" viewBox="0 0 1500 794"><rect x="1432.3" y="760" width="62.7" height="30.3" fill="#363636"/><rect x="1462.8" y="760" width="1" height="30.3" fill="#2d2d2d"/><rect x="1440.8" y="768.3" width="5.2" height="14.7" fill="#ababab"/><rect x="1449.7" y="768.3" width="5.1" height="14.7" fill="#ababab"/><rect x="1470.9" y="768.9" width="17.5" height="13.5" fill="none" stroke="#9c9c9c" stroke-width="1.3"/><ellipse cx="1479.7" cy="773.8" rx="1.9" ry="2.4" fill="#b2b2b2"/><path d="M1474.2 782.6 Q1474.6 779.2 1477.8 778.4 L1478.2 776 H1481.2 L1481.6 778.4 Q1484.8 779.2 1485.2 782.6 Z" fill="#b2b2b2"/></svg>
</body>
</html>
